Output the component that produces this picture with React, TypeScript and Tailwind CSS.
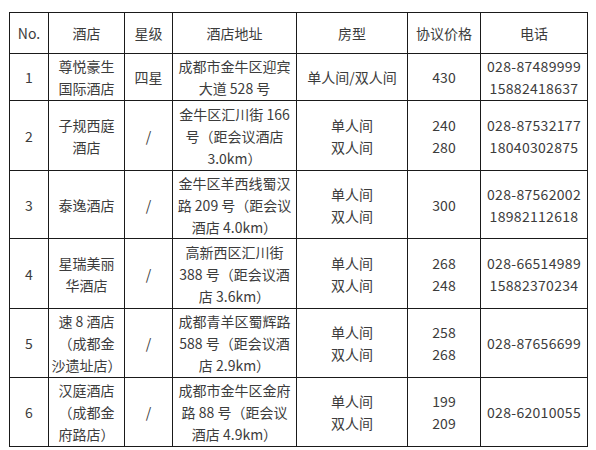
import React from "react"

type Row = {
  no: string
  hotel: string[]
  star: string
  address: string[]
  room: string[]
  price: string[]
  phone: string[]
  h: string
}

const rows: Row[] = [
  {
    no: "1",
    hotel: ["尊悦豪生", "国际酒店"],
    star: "四星",
    address: ["成都市金牛区迎宾", "大道 528 号"],
    room: ["单人间/双人间"],
    price: ["430"],
    phone: ["028-87489999", "15882418637"],
    h: "h-[47px]",
  },
  {
    no: "2",
    hotel: ["子规西庭", "酒店"],
    star: "/",
    address: ["金牛区汇川街 166", "号（距会议酒店", "3.0km）"],
    room: ["单人间", "双人间"],
    price: ["240", "280"],
    phone: ["028-87532177", "18040302875"],
    h: "h-[70px]",
  },
  {
    no: "3",
    hotel: ["泰逸酒店"],
    star: "/",
    address: ["金牛区羊西线蜀汉", "路 209 号（距会议", "酒店 4.0km）"],
    room: ["单人间", "双人间"],
    price: ["300"],
    phone: ["028-87562002", "18982112618"],
    h: "h-[68px]",
  },
  {
    no: "4",
    hotel: ["星瑞美丽", "华酒店"],
    star: "/",
    address: ["高新西区汇川街", "388 号（距会议酒", "店 3.6km）"],
    room: ["单人间", "双人间"],
    price: ["268", "248"],
    phone: ["028-66514989", "15882370234"],
    h: "h-[70px]",
  },
  {
    no: "5",
    hotel: ["速 8 酒店", "（成都金", "沙遗址店）"],
    star: "/",
    address: ["成都青羊区蜀辉路", "588 号（距会议酒", "店 2.9km）"],
    room: ["单人间", "双人间"],
    price: ["258", "268"],
    phone: ["028-87656699"],
    h: "h-[69px]",
  },
  {
    no: "6",
    hotel: ["汉庭酒店", "（成都金", "府路店）"],
    star: "/",
    address: ["成都市金牛区金府", "路 88 号（距会议", "酒店 4.9km）"],
    room: ["单人间", "双人间"],
    price: ["199", "209"],
    phone: ["028-62010055"],
    h: "h-[69px]",
  },
]

const headers = ["No.", "酒店", "星级", "酒店地址", "房型", "协议价格", "电话"]
const widths = ["w-[39px]", "w-[76px]", "w-[48px]", "w-[124px]", "w-[111px]", "w-[73px]", "w-[107px]"]

const Lines = ({ lines }: { lines: string[] }) => (
  <>
    {lines.map((l, i) => (
      <div key={i} className="whitespace-nowrap">
        {l}
      </div>
    ))}
  </>
)

export default function App() {
  const cell = "border border-[#1a1a1a] px-0 py-0 text-center align-middle"
  return (
    <div className="w-[596px] h-[450px] bg-white pl-[9px] pt-[12px] text-[14px] leading-[22px] text-[#3c3c3c] font-['Noto_Sans_CJK_SC','Noto_Sans',sans-serif]">
      <table className="table-fixed border-collapse w-[579px]">
        <colgroup>
          {widths.map((w, i) => (
            <col key={i} className={w} />
          ))}
        </colgroup>
        <thead>
          <tr className="h-[41px]">
            {headers.map((h) => (
              <th key={h} className={`${cell} font-normal`}>
                {h}
              </th>
            ))}
          </tr>
        </thead>
        <tbody>
          {rows.map((r) => (
            <tr key={r.no} className={r.h}>
              <td className={cell}>{r.no}</td>
              <td className={cell}>
                <Lines lines={r.hotel} />
              </td>
              <td className={cell}>{r.star}</td>
              <td className={cell}>
                <Lines lines={r.address} />
              </td>
              <td className={cell}>
                <Lines lines={r.room} />
              </td>
              <td className={cell}>
                <Lines lines={r.price} />
              </td>
              <td className={`${cell} tracking-[0.3px]`}>
                <Lines lines={r.phone} />
              </td>
            </tr>
          ))}
        </tbody>
      </table>
    </div>
  )
}
